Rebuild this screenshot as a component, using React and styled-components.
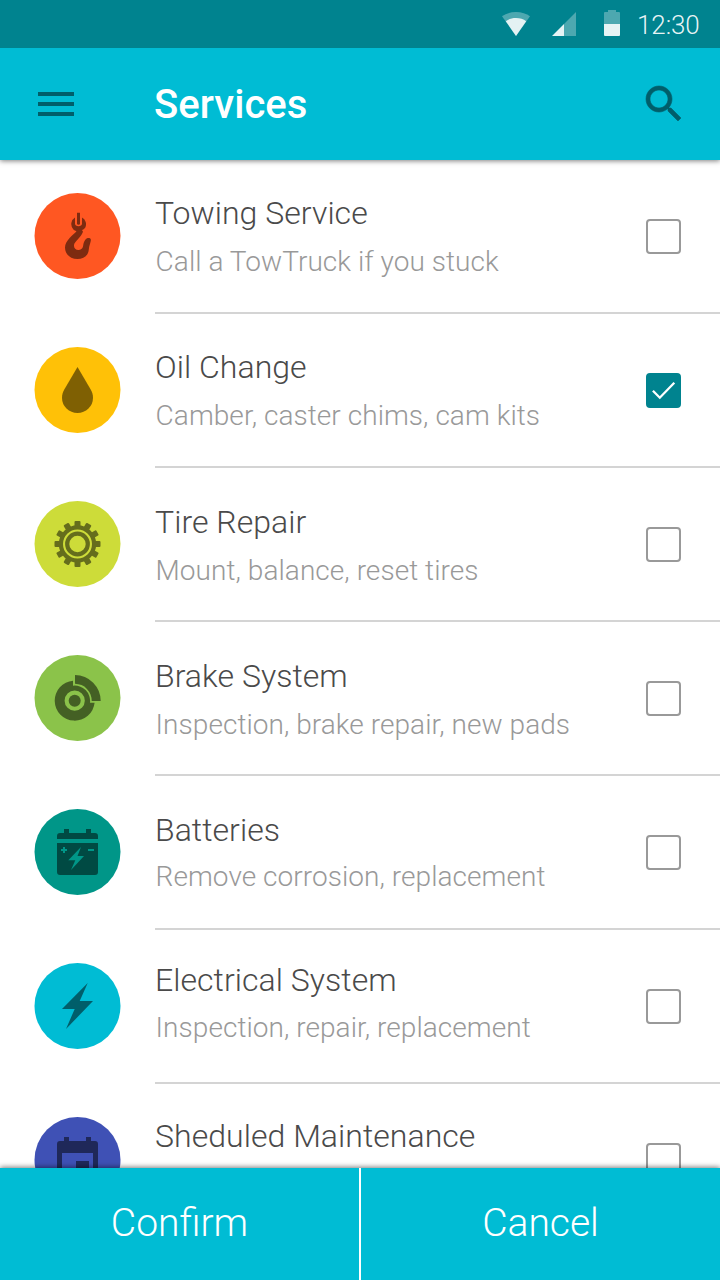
import React, { useState } from "react";
import styled, { createGlobalStyle } from "styled-components";

const GlobalStyle = createGlobalStyle`
  *, *::before, *::after { box-sizing: border-box; }
  html, body, #root { height: 100%; }
  body {
    margin: 0;
    overflow: hidden;
    background: #fff;
    font-family: Roboto, "Liberation Sans", sans-serif;
    font-weight: 300;
  }
  button { font: inherit; border: 0; background: none; padding: 0; margin: 0; cursor: pointer; }
`;

const Screen = styled.div`
  width: 720px;
  height: 1280px;
  display: flex;
  flex-direction: column;
  overflow: hidden;
  background: #fff;
`;

const StatusBar = styled.div`
  position: relative;
  z-index: 2;
  flex: none;
  height: 48px;
  display: flex;
  justify-content: flex-end;
  padding: 0 20px 0 0;
  background: #00838f;
`;

const StatusIcon = styled.svg`
  display: block;
  height: 48px;
  width: ${({ $width }) => $width}px;
  margin-right: ${({ $gap }) => $gap}px;
  fill: #fff;
`;

const Clock = styled.span`
  width: 63px;
  line-height: 50px;
  font-size: 26px;
  letter-spacing: -0.1px;
  white-space: nowrap;
  color: rgba(255, 255, 255, 0.92);
`;

const AppBar = styled.header`
  position: relative;
  z-index: 1;
  flex: none;
  height: 112px;
  display: flex;
  align-items: center;
  padding: 0 32px;
  background: #00bcd4;
  box-shadow: 0 1px 5px rgba(0, 0, 0, 0.5);
`;

const IconButton = styled.button`
  width: 48px;
  height: 48px;
  svg { display: block; width: 48px; height: 48px; fill: #005e6a; }
`;

const PageTitle = styled.h1`
  flex: 1;
  margin: 0 0 0 74px;
  padding-top: 2px;
  font-size: 40px;
  line-height: 48px;
  font-weight: 500;
  letter-spacing: 0.05px;
  color: #fff;
`;

const ServiceList = styled.ul`
  flex: 1;
  min-height: 0;
  overflow: hidden;
  margin: 0;
  padding: 0;
  list-style: none;
`;

const ServiceRow = styled.li`
  height: 154px;
  display: flex;
  padding-left: 34px;
`;

const Badge = styled.svg`
  flex: none;
  display: block;
  width: 87px;
  height: 86px;
  margin: 33px 34px 0 0;
`;

const RowBody = styled.div`
  flex: 1;
  display: flex;
  align-items: flex-start;
  border-bottom: 2px solid #d4d4d4;
`;

const Texts = styled.div`
  flex: 1;
  padding-top: ${({ $top }) => $top}px;
`;

const Name = styled.div`
  font-size: 32px;
  line-height: 38px;
  white-space: nowrap;
  letter-spacing: 0.04px;
  color: #4a4a4a;
`;

const Details = styled.div`
  margin-top: ${({ $gap }) => $gap}px;
  padding-left: 0.6px;
  font-size: 28px;
  line-height: 34px;
  white-space: nowrap;
  letter-spacing: 0.05px;
  color: #999;
`;

const CheckBox = styled.button`
  flex: none;
  width: 35px;
  height: 35px;
  margin: 59px 39px 0 0;
  border: 2px solid ${({ $checked }) => ($checked ? "#00838f" : "#999")};
  border-radius: 4px;
  background: ${({ $checked }) => ($checked ? "#00838f" : "#fff")};
  svg { display: block; width: 31px; height: 31px; }
`;

const ActionBar = styled.footer`
  position: relative;
  z-index: 1;
  flex: none;
  height: 112px;
  display: flex;
  background: #00bcd4;
  box-shadow: 0 -1px 5px rgba(0, 0, 0, 0.5);
`;

const Action = styled.button`
  flex: 1;
  padding-bottom: 3px;
  font-size: 39px;
  line-height: 48px;
  font-weight: 300;
  color: #fff;
`;

const Divider = styled.span`
  width: 2px;
  background: #fff;
`;

const HookIcon = () => (
  <>
    <path d="M43 19.7h3v10.6a1.5 1.5 0 0 1-3 0z" />
    <path d="M41 24.600a7.600 7.600 0 0 0-1.600 11.800c1.200 1 2.300 1.300 3.100 1.900-3 3.400-11.500 9.500-11.500 16.200 0 6.800 5.200 11.500 12.500 11.500 5.800 0 10.800-3 11.300-9.500.2-3.700 2.100-7.500 2.100-9.600 0-2.300-3.500-2.600-5.200-.7-2.300 2.500-2.200 5.100-2.700 7.200-.5 2-2.300 3.500-4.600 3.500-2.800 0-4.600-2-4.400-4.600.3-4 6.700-7.300 9-13.600l-1-1.600c1.200-.5 2.200-1 3.200-2.300a7.600 7.600 0 0 0-3.200-10.200v6.200c0 1.500-1.500 2.500-3.500 2.500s-3.500-1-3.500-2.500z" />
  </>
);

const DropIcon = () => (
  <path d="M43.500 20L30.300 42.500C28.800 45.100 28 47.700 28 50.700a15.500 15.300 0 0 0 31 0c0-3-.8-5.600-2.300-8.200z" />
);

const GearIcon = () => (
  <>
    <path fillRule="evenodd" d="M24.800 43a18.700 18.700 0 1 0 37.400 0a18.700 18.700 0 1 0-37.400 0zM29 43a14.500 14.500 0 1 1 29 0a14.500 14.500 0 1 1-29 0z" />
    {Array.from({ length: 12 }, (_, i) => (
      <rect key={i} x="40.500" y="20" width="6" height="7" rx="1" transform={`rotate(${i * 30} 43.500 43)`} />
    ))}
    <circle cx="43.500" cy="43" r="10.300" fill="none" stroke="#000" strokeWidth="4.200" />
  </>
);

const BrakeIcon = () => (
  <>
    <path fillRule="evenodd" d="M39 25.700v5A15.300 15.300 0 0 1 56 47.700h4.600A20 20 0 1 1 39 25.700zM40.700 35.600a10.100 10.100 0 1 0 0 20.200a10.100 10.100 0 1 0 0-20.200z" />
    <circle cx="40.700" cy="45.700" r="6" />
    <path d="M41 20A26 26 0 0 1 66.700 46H57.700A17 17 0 0 0 41 28.700z" />
  </>
);

const BatteryIcon = () => (
  <>
    <path d="M30 20h5v4h17v-4h5v4h4a3 3 0 0 1 3 3v3H23v-3a3 3 0 0 1 3-3h4z" />
    <path fillRule="evenodd" d="M23 34h41v29a3 3 0 0 1-3 3H26a3 3 0 0 1-3-3zM29 38v2h-2v2h2v2h2v-2h2v-2h-2v-2zM54 40v2h6v-2zM47 38L34.300 51.300h7L37 61 50 47h-6.500z" />
  </>
);

const BoltIcon = () => <path d="M53.700 20L28 46H40.700L32 66 59 38H45.700z" />;

const CalendarIcon = () => (
  <>
    <path fillRule="evenodd" d="M30 20h5v4h17v-4h5v4h4a3 3 0 0 1 3 3v36a3 3 0 0 1-3 3H26a3 3 0 0 1-3-3V27a3 3 0 0 1 3-3h4zM28 36v25h31V36z" />
    <path d="M42 44h13v13H42z" />
  </>
);

const SERVICES = [
  { name: "Towing Service", details: "Call a TowTruck if you stuck", color: "#ff5722", Icon: HookIcon, top: 34, gap: 13 },
  { name: "Oil Change", details: "Camber, caster chims, cam kits", color: "#ffc107", Icon: DropIcon, top: 34, gap: 13 },
  { name: "Tire Repair", details: "Mount, balance, reset tires", color: "#cddc39", Icon: GearIcon, top: 35, gap: 13 },
  { name: "Brake System", details: "Inspection, brake repair, new pads", color: "#8bc34a", Icon: BrakeIcon, top: 35, gap: 13 },
  { name: "Batteries", details: "Remove corrosion, replacement", color: "#009688", Icon: BatteryIcon, top: 35, gap: 11 },
  { name: "Electrical System", details: "Inspection, repair, replacement", color: "#00bcd4", Icon: BoltIcon, top: 31, gap: 12 },
  { name: "Sheduled Maintenance", details: "", color: "#3f51b5", Icon: CalendarIcon, top: 33, gap: 13 },
];

function Service({ service, checked, onToggle }) {
  const { name, details, color, Icon, top, gap } = service;
  return (
    <ServiceRow>
      <Badge viewBox="0 0 87 86" aria-hidden="true">
        <circle cx="43.5" cy="43" r="43" fill={color} />
        <g opacity="0.5"><Icon /></g>
      </Badge>
      <RowBody>
        <Texts $top={top}>
          <Name>{name}</Name>
          <Details $gap={gap}>{details}</Details>
        </Texts>
        <CheckBox role="checkbox" aria-checked={checked} aria-label={name} $checked={checked} onClick={onToggle}>
          {checked && (
            <svg viewBox="0 0 31 31">
              <path d="M4.900 15.700L11.800 22.700 26.300 7.700" fill="none" stroke="#fff" strokeWidth="2.300" />
            </svg>
          )}
        </CheckBox>
      </RowBody>
    </ServiceRow>
  );
}

export default function App() {
  const [selected, setSelected] = useState({ "Oil Change": true });
  const toggle = (name) => setSelected((s) => ({ ...s, [name]: !s[name] }));

  return (
    <>
      <GlobalStyle />
      <Screen>
        <StatusBar>
          <StatusIcon viewBox="0 0 28 48" $width={28} $gap={22}>
            <path opacity="0.3" d="M14 36L0 16.300C3.500 13.600 8.500 12 14 12s10.500 1.600 14 4.300z" />
            <path opacity="0.85" d="M14 36L3.800 21.300C6.500 19 10 18 14 18s7.500 1 10.200 3.300z" />
          </StatusIcon>
          <StatusIcon viewBox="0 0 24 48" $width={24} $gap={28}>
            <path opacity="0.3" d="M24 12v24H12V24z" />
            <path opacity="0.9" d="M12 24v12H0z" />
          </StatusIcon>
          <StatusIcon viewBox="0 0 16 48" $width={16} $gap={17}>
            <path opacity="0.3" d="M4 10h8v2h3a1 1 0 0 1 1 1v11H0V13a1 1 0 0 1 1-1h3z" />
            <path opacity="0.9" d="M0 24h16v11a1 1 0 0 1-1 1H1a1 1 0 0 1-1-1z" />
          </StatusIcon>
          <Clock>12:30</Clock>
        </StatusBar>
        <AppBar>
          <IconButton aria-label="Menu">
            <svg viewBox="0 0 48 48"><path d="M6 12h36v4H6zM6 22h36v4H6zM6 32h36v4H6z" /></svg>
          </IconButton>
          <PageTitle>Services</PageTitle>
          <IconButton aria-label="Search">
            <svg viewBox="0 0 24 24" stroke="#005e6a" strokeWidth="0.3">
              <path d="M15.500 14h-.79l-.28-.27C15.410 12.590 16 11.110 16 9.500 16 5.910 13.090 3 9.500 3S3 5.910 3 9.500 5.910 16 9.500 16c1.610 0 3.090-.59 4.230-1.570l.27.28v.79l5 4.990L20.490 19l-4.990-5zm-6 0C7.010 14 5 11.990 5 9.500S7.010 5 9.500 5 14 7.010 14 9.500 11.990 14 9.500 14z" />
            </svg>
          </IconButton>
        </AppBar>
        <ServiceList>
          {SERVICES.map((s) => (
            <Service key={s.name} service={s} checked={!!selected[s.name]} onToggle={() => toggle(s.name)} />
          ))}
        </ServiceList>
        <ActionBar>
          <Action>Confirm</Action>
          <Divider />
          <Action>Cancel</Action>
        </ActionBar>
      </Screen>
    </>
  );
}
